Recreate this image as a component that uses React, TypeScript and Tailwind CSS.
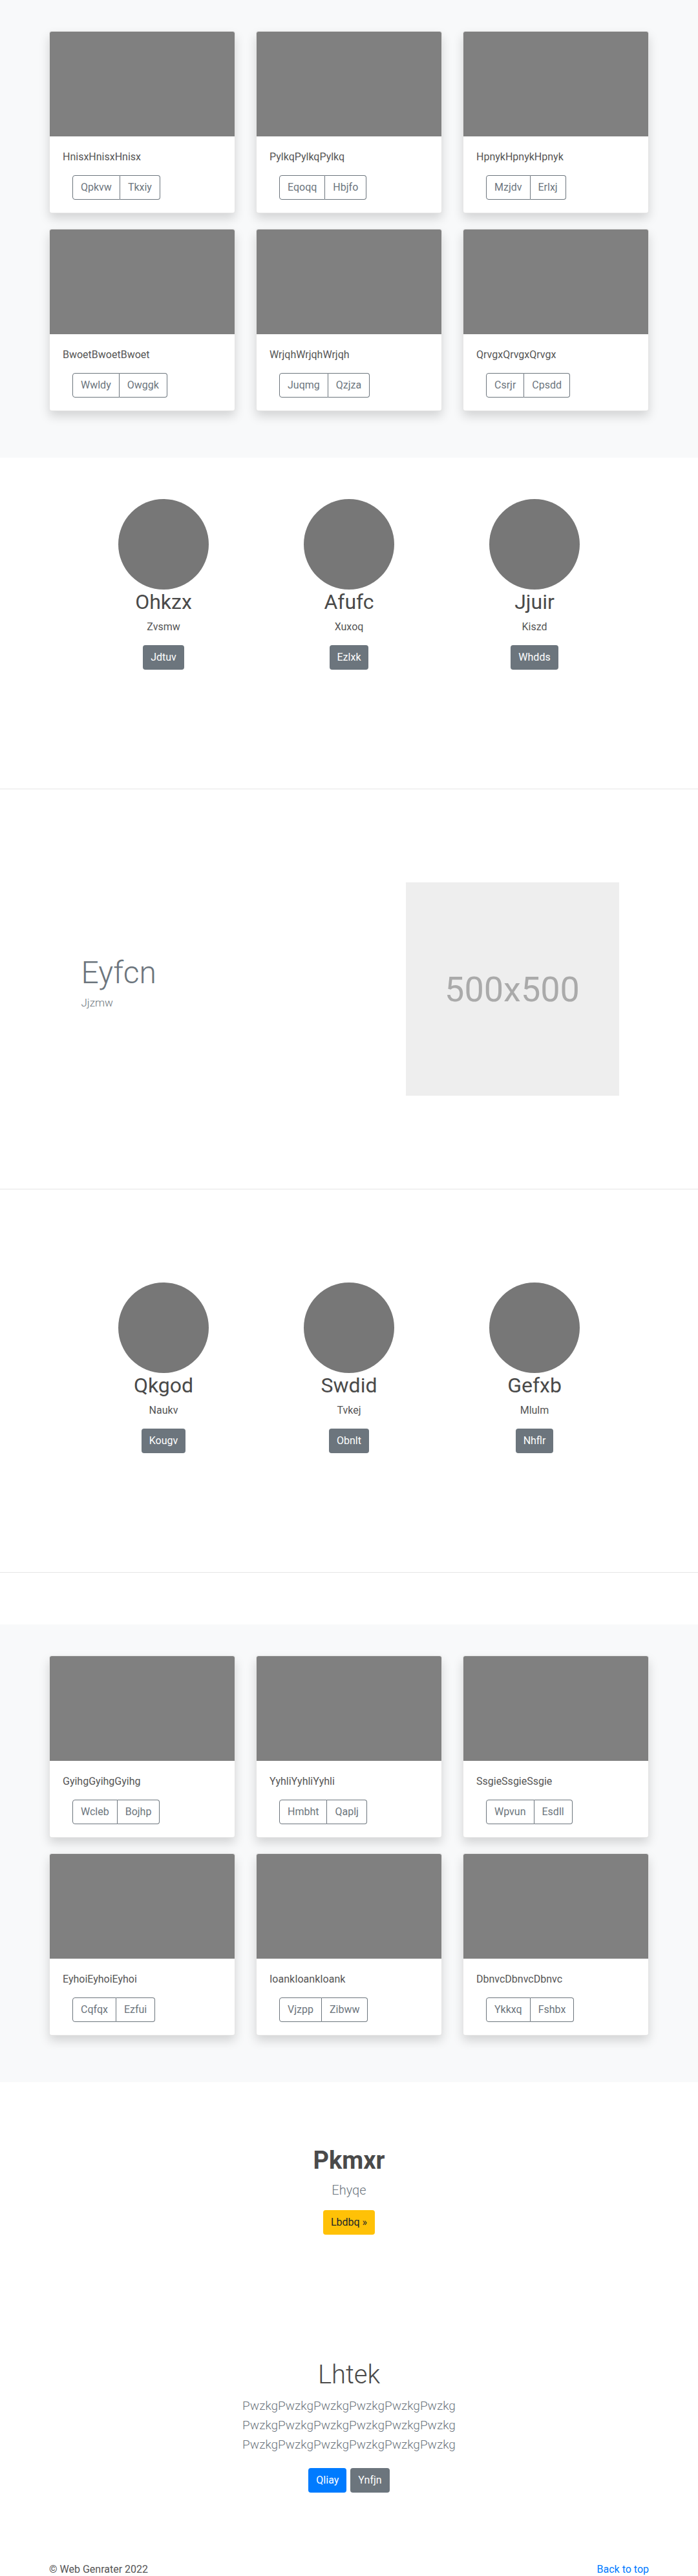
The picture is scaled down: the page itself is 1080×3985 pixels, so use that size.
const albumTop = [
  { title: 'HnisxHnisxHnisx', a: 'Qpkvw', b: 'Tkxiy' },
  { title: 'PylkqPylkqPylkq', a: 'Eqoqq', b: 'Hbjfo' },
  { title: 'HpnykHpnykHpnyk', a: 'Mzjdv', b: 'Erlxj' },
  { title: 'BwoetBwoetBwoet', a: 'Wwldy', b: 'Owggk' },
  { title: 'WrjqhWrjqhWrjqh', a: 'Juqmg', b: 'Qzjza' },
  { title: 'QrvgxQrvgxQrvgx', a: 'Csrjr', b: 'Cpsdd' },
];

const albumBottom = [
  { title: 'GyihgGyihgGyihg', a: 'Wcleb', b: 'Bojhp' },
  { title: 'YyhliYyhliYyhli', a: 'Hmbht', b: 'Qaplj' },
  { title: 'SsgieSsgieSsgie', a: 'Wpvun', b: 'Esdll' },
  { title: 'EyhoiEyhoiEyhoi', a: 'Cqfqx', b: 'Ezfui' },
  { title: 'IoankIoankIoank', a: 'Vjzpp', b: 'Zibww' },
  { title: 'DbnvcDbnvcDbnvc', a: 'Ykkxq', b: 'Fshbx' },
];

const peopleTop = [
  { name: 'Ohkzx', sub: 'Zvsmw', btn: 'Jdtuv' },
  { name: 'Afufc', sub: 'Xuxoq', btn: 'Ezlxk' },
  { name: 'Jjuir', sub: 'Kiszd', btn: 'Whdds' },
];

const peopleBottom = [
  { name: 'Qkgod', sub: 'Naukv', btn: 'Kougv' },
  { name: 'Swdid', sub: 'Tvkej', btn: 'Obnlt' },
  { name: 'Gefxb', sub: 'Mlulm', btn: 'Nhflr' },
];

type CardData = { title: string; a: string; b: string };
type PersonData = { name: string; sub: string; btn: string };

function Card({ title, a, b }: CardData) {
  return (
    <div className="bg-white border border-black/10 rounded overflow-hidden shadow-[0_8px_16px_rgba(0,0,0,0.15)]">
      <div className="h-[162px] bg-[#808080]" />
      <div className="p-5">
        <p className="text-base leading-6 text-[#555555] mb-4">{title}</p>
        <div className="ml-[15px] inline-flex">
          <button className="h-[38px] px-3 border border-[#6c757d] rounded-l text-[#6c757d] text-base">{a}</button>
          <button className="h-[38px] px-3 border border-l-0 border-[#6c757d] rounded-r text-[#6c757d] text-base">{b}</button>
        </div>
      </div>
    </div>
  );
}

function Album({ cards }: { cards: CardData[] }) {
  return (
    <section className="bg-[#f8f9fa] py-12">
      <div className="w-[928px] mx-auto grid grid-cols-3 gap-x-8">
        {cards.map((c) => (
          <div key={c.title} className="mb-6">
            <Card {...c} />
          </div>
        ))}
      </div>
    </section>
  );
}

function Person({ name, sub, btn }: PersonData) {
  return (
    <div className="flex flex-col items-center text-center">
      <div className="w-[140px] h-[140px] rounded-full bg-[#777777]" />
      <h2 className="text-[32px] leading-[38px] text-[#4a4a4a] mb-2">{name}</h2>
      <p className="text-base leading-6 text-[#555555] mb-4">{sub}</p>
      <button className="h-[38px] px-3 rounded bg-[#6c757d] text-white text-base">{btn}</button>
    </div>
  );
}

function People({ people, top }: { people: PersonData[]; top: string }) {
  return (
    <section className={top + ' pb-[184px]'}>
      <div className="w-[861px] mx-auto grid grid-cols-3">
        {people.map((p) => (
          <Person key={p.name} {...p} />
        ))}
      </div>
    </section>
  );
}

export default function App() {
  return (
    <div className="bg-white font-['Roboto','Segoe_UI',sans-serif] text-[#555555]">
      <Album cards={albumTop} />

      <People people={peopleTop} top="pt-16" />

      <hr className="border-0 border-t border-[#e5e5e5]" />

      <section className="py-[144px]">
        <div className="w-[861px] mx-auto flex items-center justify-between">
          <div className="pl-4 pb-[22px]">
            <h2 className="text-[48px] leading-[63px] font-light text-[#6c757d]">Eyfcn</h2>
            <p className="mt-[2px] text-[17px] leading-[27px] font-light text-[#6c757d]">Jjzmw</p>
          </div>
          <div className="mr-[13px] w-[330px] h-[330px] bg-[#eeeeee] flex items-center justify-center">
            <span className="text-[54px] text-[#aaaaaa]">500x500</span>
          </div>
        </div>
      </section>

      <hr className="border-0 border-t border-[#e5e5e5]" />

      <People people={peopleBottom} top="pt-[144px]" />

      <hr className="border-0 border-t border-[#e5e5e5] mb-20" />

      <Album cards={albumBottom} />

      <section className="pt-[98px] text-center">
        <h1 className="text-[38px] leading-[46px] font-bold text-[#4a4a4a]">Pkmxr</h1>
        <p className="mt-2 text-xl leading-[30px] font-light text-[#6c757d]">Ehyqe</p>
        <button className="mt-4 h-[38px] px-3 rounded bg-[#ffc107] text-[#212529] text-base">Lbdbq »</button>
      </section>

      <section className="mt-[192px] text-center">
        <h1 className="text-[40px] leading-[50px] font-light text-[#4a4a4a]">Lhtek</h1>
        <div className="mt-2 flex flex-col items-center text-[19px] leading-[30px] font-light text-[#6c757d]">
          <span>PwzkgPwzkgPwzkgPwzkgPwzkgPwzkg</span>
          <span>PwzkgPwzkgPwzkgPwzkgPwzkgPwzkg</span>
          <span>PwzkgPwzkgPwzkgPwzkgPwzkgPwzkg</span>
        </div>
        <div className="mt-[21px] flex justify-center gap-[6px]">
          <button className="h-[38px] px-3 rounded bg-[#007bff] text-white text-base">Qliay</button>
          <button className="h-[38px] px-3 rounded bg-[#6c757d] text-white text-base">Ynfjn</button>
        </div>
      </section>

      <footer className="mt-[107px] pb-4">
        <div className="w-[928px] mx-auto flex justify-between text-base leading-6">
          <p className="text-[#555555]">© Web Genrater 2022</p>
          <a href="#" className="text-[#007bff]">Back to top</a>
        </div>
      </footer>
    </div>
  );
}
